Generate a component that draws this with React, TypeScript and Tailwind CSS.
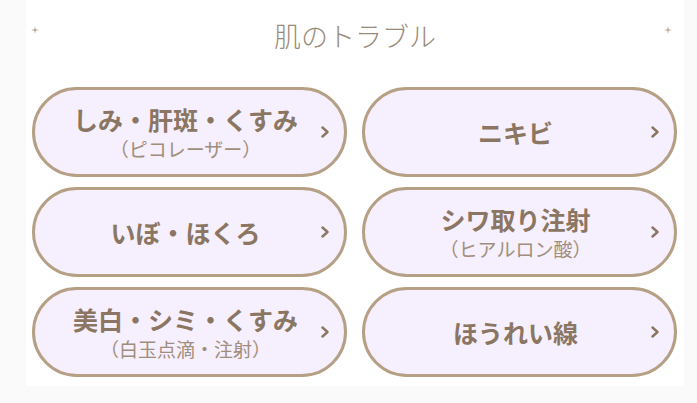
import React from "react";

const font = { fontFamily: '"Noto Sans CJK JP", "Noto Sans", sans-serif' };

function Chevron() {
  return (
    <svg width="10" height="12" viewBox="0 0 10 12" className="absolute right-[14px] top-1/2 -translate-y-1/2">
      <path d="M2.5 1.5 L7.5 6 L2.5 10.5" fill="none" stroke="#8a7662" strokeWidth="2.4" strokeLinecap="round" strokeLinejoin="round" />
    </svg>
  );
}

function Sparkle() {
  return (
    <svg width="8" height="8" viewBox="0 0 8 8">
      <path d="M4 0 L4.7 3.3 L8 4 L4.7 4.7 L4 8 L3.3 4.7 L0 4 L3.3 3.3 Z" fill="#b8a890" />
    </svg>
  );
}

function Btn({ main, sub }: { main: string; sub?: string }) {
  return (
    <div className="relative h-[90px] rounded-full border-[3px] border-[#b59f85] bg-[#f6effd] flex flex-col items-center justify-center pr-[8px]">
      <div className="text-[25px] font-bold leading-[34px] text-[#8a7662]">{main}</div>
      {sub && <div className="text-[19px] leading-[26px] text-[#a08e7c]">{sub}</div>}
      <Chevron />
    </div>
  );
}

export default function App() {
  return (
    <div className="w-[697px] h-[403px] bg-[#fafafa] overflow-hidden" style={font}>
      <div className="ml-[26px] w-[658px] h-[386px] bg-white pt-[17px] px-[6px]">
        <div className="relative flex items-center justify-center h-[38px]">
          <div className="absolute left-[-1px] top-[9px]"><Sparkle /></div>
          <div className="absolute right-[6px] top-[9px]"><Sparkle /></div>
          <div className="text-[27px] font-light text-[#9a8a7a]">肌のトラブル</div>
        </div>
        <div className="grid grid-cols-2 gap-x-[15px] gap-y-[10px] mt-[32px] pr-[1px]">
          <Btn main="しみ・肝斑・くすみ" sub="（ピコレーザー）" />
          <Btn main="ニキビ" />
          <Btn main="いぼ・ほくろ" />
          <Btn main="シワ取り注射" sub="（ヒアルロン酸）" />
          <Btn main="美白・シミ・くすみ" sub="（白玉点滴・注射）" />
          <Btn main="ほうれい線" />
        </div>
      </div>
    </div>
  );
}
